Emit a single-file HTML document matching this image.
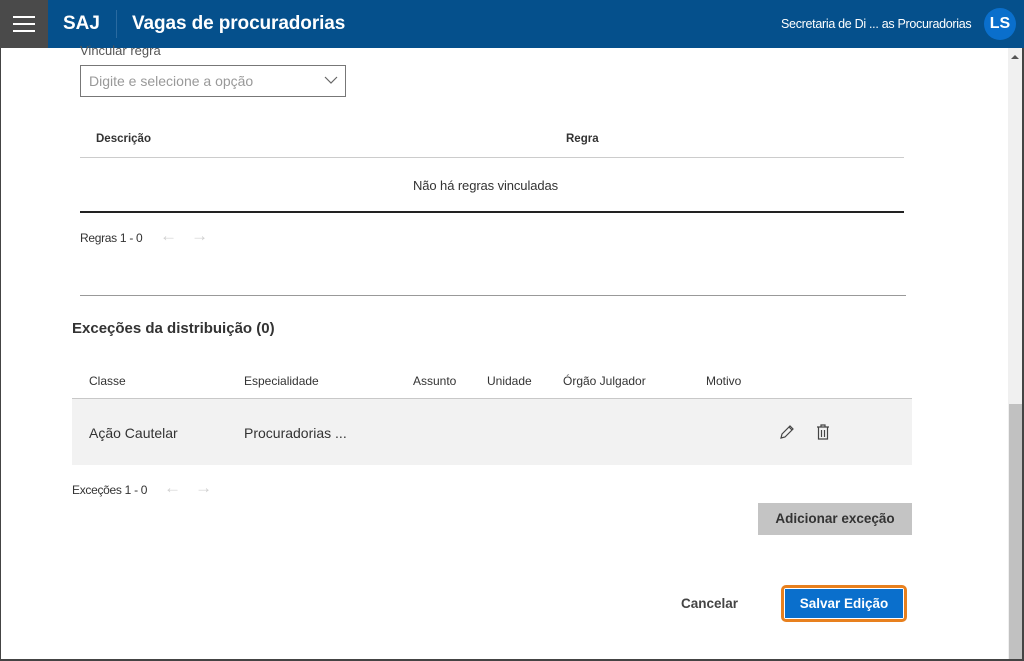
<!DOCTYPE html>
<html><head><meta charset="utf-8"><style>
*{box-sizing:border-box;margin:0;padding:0}
body{width:1024px;height:661px;overflow:hidden;background:#fff;font-family:"Liberation Sans",sans-serif;color:#333;position:relative}
.abs{position:absolute}
.hdr{left:0;top:0;width:1024px;height:48px;background:#05508c}
.ham{left:0;top:0;width:48px;height:48px;background:#4a4a4a}
.ham i{position:absolute;left:13px;width:22px;height:2px;background:#fff}
.t{white-space:nowrap}
.ar{font-size:17px;color:#d0d0d0}
</style></head><body>
<div class="abs hdr"></div>
<div class="abs ham"><i style="top:16px"></i><i style="top:23px"></i><i style="top:30px"></i></div>
<div class="abs t" style="left:63px;top:13px;color:#fff;font-size:19px;font-weight:bold">SAJ</div>
<div class="abs" style="left:116px;top:10px;width:1px;height:28px;background:#2a6aa0"></div>
<div class="abs t" style="left:132px;top:13px;color:#fff;font-size:19px;font-weight:bold;letter-spacing:-0.1px">Vagas de procuradorias</div>
<div class="abs t" style="left:781px;top:17px;color:#fff;font-size:12.5px;letter-spacing:-0.3px">Secretaria de Di ... as Procuradorias</div>
<div class="abs" style="left:984px;top:8px;width:32px;height:32px;border-radius:50%;background:#0a6fcc;color:#fff;font-weight:bold;font-size:16px;text-align:center;line-height:32px">LS</div>

<div class="abs" style="left:1008px;top:48px;width:14px;height:612px;background:#f0f0f0"></div>
<div class="abs" style="left:1011px;top:55px;width:0;height:0;border-left:4px solid transparent;border-right:4px solid transparent;border-bottom:4px solid #555"></div>
<div class="abs" style="left:1009px;top:404px;width:13px;height:256px;background:#c1c1c1"></div>
<div class="abs" style="left:0;top:48px;width:1px;height:613px;background:#444"></div>
<div class="abs" style="left:1022px;top:48px;width:2px;height:613px;background:#444"></div>
<div class="abs" style="left:0;top:659px;width:1024px;height:2px;background:#444"></div>

<div class="abs t" style="left:80px;top:43px;font-size:13px;color:#555">Vincular regra</div>
<div class="abs" style="left:80px;top:65px;width:266px;height:32px;border:1px solid #777;background:#fff"></div>
<div class="abs t" style="left:89px;top:73px;font-size:14px;color:#999">Digite e selecione a opção</div>
<svg class="abs" style="left:324px;top:75px" width="14" height="10"><path d="M1 2l6 6 6-6" fill="none" stroke="#666" stroke-width="1.2"/></svg>

<div class="abs t" style="left:96px;top:133px;font-size:11.5px;font-weight:bold;color:#333">Descrição</div>
<div class="abs t" style="left:566px;top:133px;font-size:11.5px;font-weight:bold;color:#333">Regra</div>
<div class="abs" style="left:80px;top:157px;width:824px;height:1px;background:#ccc"></div>
<div class="abs t" style="left:413px;top:178px;font-size:13px;color:#333;letter-spacing:-0.1px">Não há regras vinculadas</div>
<div class="abs" style="left:80px;top:211px;width:824px;height:2px;background:#222"></div>
<div class="abs t" style="left:80px;top:231px;font-size:12px;color:#333;letter-spacing:-0.3px">Regras 1 - 0</div>
<div class="abs t ar" style="left:160px;top:226px">←&nbsp;&nbsp;&nbsp;→</div>
<div class="abs" style="left:80px;top:295px;width:826px;height:1px;background:#999"></div>

<div class="abs t" style="left:72px;top:320px;font-size:15px;font-weight:bold;color:#333">Exceções da distribuição (0)</div>
<div class="abs t" style="left:89px;top:374px;font-size:12px;color:#333">Classe</div>
<div class="abs t" style="left:244px;top:374px;font-size:12px;color:#333">Especialidade</div>
<div class="abs t" style="left:413px;top:374px;font-size:12px;color:#333">Assunto</div>
<div class="abs t" style="left:487px;top:374px;font-size:12px;color:#333">Unidade</div>
<div class="abs t" style="left:563px;top:374px;font-size:12px;color:#333">Órgão Julgador</div>
<div class="abs t" style="left:706px;top:374px;font-size:12px;color:#333">Motivo</div>
<div class="abs" style="left:72px;top:398px;width:840px;height:67px;background:#f2f2f2;border-top:1px solid #c8c8c8"></div>
<div class="abs t" style="left:89px;top:425px;font-size:14px;color:#333">Ação Cautelar</div>
<div class="abs t" style="left:244px;top:425px;font-size:14px;color:#333">Procuradorias ...</div>
<svg class="abs" style="left:779px;top:424px" width="16" height="16"><path d="M2 14l1-4 8-8 3 3-8 8z M10 3l3 3" fill="none" stroke="#444" stroke-width="1.2"/></svg>
<svg class="abs" style="left:816px;top:424px" width="14" height="16"><path d="M1 3h12M5 3V1h4v2M2.5 3v12h9V3M5.5 6v7M8.5 6v7" fill="none" stroke="#444" stroke-width="1.2"/></svg>
<div class="abs t" style="left:72px;top:483px;font-size:12px;color:#333;letter-spacing:-0.3px">Exceções 1 - 0</div>
<div class="abs t ar" style="left:164px;top:478px">←&nbsp;&nbsp;&nbsp;→</div>
<div class="abs" style="left:758px;top:503px;width:154px;height:32px;background:#c4c4c4;color:#333;font-size:13.5px;font-weight:bold;text-align:center;line-height:32px">Adicionar exceção</div>

<div class="abs t" style="left:681px;top:596px;font-size:13.5px;font-weight:bold;color:#444">Cancelar</div>
<div class="abs" style="left:781px;top:585px;width:126px;height:37px;border:3px solid #e8801e;border-radius:5px;background:#fff"></div>
<div class="abs" style="left:785px;top:589px;width:118px;height:29px;background:#0a6fcc;color:#fff;font-size:13.5px;font-weight:bold;text-align:center;line-height:29px">Salvar Edição</div>
</body></html>
